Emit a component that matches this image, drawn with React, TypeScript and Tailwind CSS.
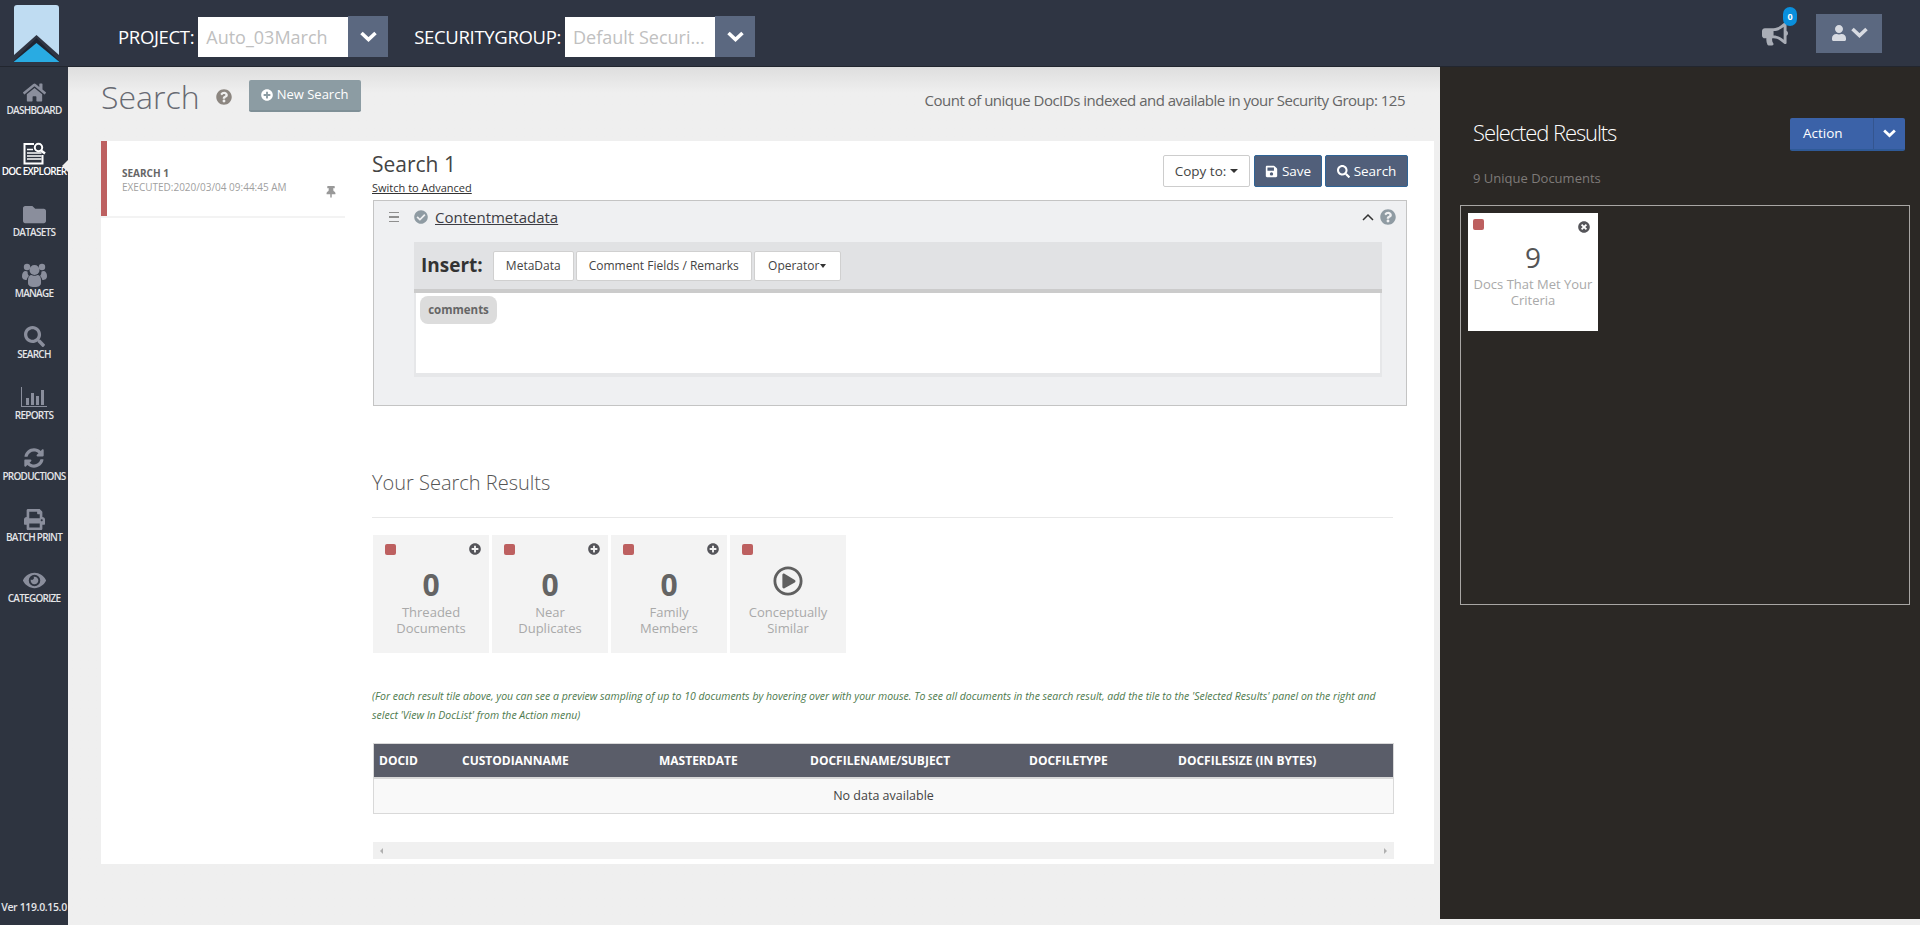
import {
  FaBullhorn,
  FaCheckCircle,
  FaEye,
  FaFolder,
  FaHome,
  FaPlusCircle,
  FaPrint,
  FaQuestionCircle,
  FaRegPlayCircle,
  FaSave,
  FaSearch,
  FaSyncAlt,
  FaThumbtack,
  FaTimesCircle,
  FaUser,
} from "react-icons/fa";

function Chevron({ width = 17 }: { width?: number }) {
  return (
    <svg width={width} height={width * 0.65} viewBox="0 0 17 11" fill="none" stroke="currentColor" strokeWidth="3.6">
      <path d="M1.500 2l7 6.500 7-6.500" />
    </svg>
  );
}

function DocExplorerIcon() {
  return (
    <svg width="23" height="23" viewBox="0 0 23 23" fill="none" stroke="#ffffff">
      <path d="M11 2H1.500v19.500h18V13" strokeWidth="2" />
      <path d="M4 7.500h6M4 11h14.500M4 14h14.500M4 17h14.500" strokeWidth="1.700" />
      <circle cx="15.500" cy="5.500" r="3.700" strokeWidth="2" />
      <path d="M18 8.500l4 3" strokeWidth="2.600" />
    </svg>
  );
}

function ManageIcon() {
  return (
    <svg width="25" height="24" viewBox="0 0 25 24" fill="#8a8e9c">
      <circle cx="5" cy="4" r="3.200" />
      <circle cx="20" cy="4" r="3.200" />
      <circle cx="12.500" cy="7" r="5" />
      <path d="M0 13c0-3 1.500-5 3.500-5 .8 0 1.600.3 2.200.8-.4 1.300.3 3 1.300 4.200-1.200 1-2 2.300-2.300 4C2 17 0 16 0 13z" />
      <path d="M25 13c0-3-1.500-5-3.500-5-.8 0-1.600.3-2.200.8.4 1.300-.3 3-1.300 4.200 1.200 1 2 2.300 2.300 4C23 17 25 16 25 13z" />
      <path d="M6 17c0-3 1.500-5 3.500-5 1 1 5 1 6 0 2 0 3.500 2 3.500 5v3c0 2.500-2 4-6.500 4S6 22.500 6 20z" />
    </svg>
  );
}

function ReportsIcon() {
  return (
    <svg width="26" height="20" viewBox="0 0 26 20" fill="#8a8e9c">
      <path d="M0 0h1v19h25v1H0z" />
      <rect x="5" y="11" width="3" height="7" />
      <rect x="10" y="6" width="3" height="12" />
      <rect x="15" y="9" width="3" height="9" />
      <rect x="20" y="3" width="3" height="15" />
    </svg>
  );
}

function Logo() {
  return (
    <svg width="48" height="58" viewBox="0 0 48 58">
      <path d="M1 3a3 3 0 0 1 3-3h39a3 3 0 0 1 3 3v47L23.500 30 1 50z" fill="#bfdcf2" />
      <path d="M0 57L23.500 33 47 57H40L23.500 40 7 57z" fill="#1e2532" />
      <path d="M0.500 57L23.500 38 46.500 57z" fill="#29abe2" />
    </svg>
  );
}

const navItems = [
  { label: "DASHBOARD", icon: <FaHome className="text-[23px] text-[#8a8e9c]" /> },
  { label: "DOC EXPLORER", icon: <DocExplorerIcon />, active: true },
  { label: "DATASETS", icon: <FaFolder className="text-[23px] text-[#8a8e9c]" /> },
  { label: "MANAGE", icon: <ManageIcon /> },
  { label: "SEARCH", icon: <FaSearch className="text-[21px] text-[#8a8e9c]" /> },
  { label: "REPORTS", icon: <ReportsIcon /> },
  { label: "PRODUCTIONS", icon: <FaSyncAlt className="text-[20px] text-[#8a8e9c]" /> },
  { label: "BATCH PRINT", icon: <FaPrint className="text-[21px] text-[#8a8e9c]" /> },
  { label: "CATEGORIZE", icon: <FaEye className="text-[23px] text-[#8a8e9c]" /> },
];

const tiles = [
  { value: "0", line1: "Threaded", line2: "Documents" },
  { value: "0", line1: "Near", line2: "Duplicates" },
  { value: "0", line1: "Family", line2: "Members" },
  { value: null, line1: "Conceptually", line2: "Similar" },
];

const columns = [
  { label: "DOCID", width: "w-[83px]" },
  { label: "CUSTODIANNAME", width: "w-[197px]" },
  { label: "MASTERDATE", width: "w-[151px]" },
  { label: "DOCFILENAME/SUBJECT", width: "w-[219px]" },
  { label: "DOCFILETYPE", width: "w-[149px]" },
  { label: "DOCFILESIZE (IN BYTES)", width: "w-[200px]" },
];

function HeaderSelect({ label, value }: { label: string; value: string }) {
  return (
    <div className="mt-[7px] flex items-center">
      <span className="mr-[4px] text-[18.500px] tracking-[-0.33px] text-white">{label}</span>
      <div className="flex h-[41px] items-end">
        <div className="flex h-[40px] w-[150px] items-center bg-white pl-2 text-[18px] text-[#c0c0c0]">{value}</div>
        <div className="flex h-[41px] w-10 items-center justify-center bg-[#5b6880] text-white">
          <Chevron />
        </div>
      </div>
    </div>
  );
}

function Sidebar() {
  return (
    <aside className="flex w-[68px] shrink-0 flex-col bg-[#2e3440] pt-[13px]">
      {navItems.map((item) => (
        <div key={item.label} className="relative flex h-[61px] flex-col items-center">
          <div className="flex h-[24px] items-center justify-center">{item.icon}</div>
          <span className={`-mt-px whitespace-nowrap text-[10px] leading-[14px] font-semibold tracking-[-0.75px] ${item.active ? "text-white" : "text-[#e4e5e8]"}`}>
            {item.label}
          </span>
          {item.active && (
            <div className="absolute right-0 top-[19px] h-0 w-0 border-y-[6px] border-r-[6px] border-y-transparent border-r-[#efefef]" />
          )}
        </div>
      ))}
      <div className="mt-auto pb-[9px] text-center text-[10.500px] font-semibold tracking-[-0.35px] whitespace-nowrap text-[#e4e5e8]">Ver 119.0.15.0</div>
    </aside>
  );
}

function ResultTile({ value, line1, line2 }: { value: string | null; line1: string; line2: string }) {
  return (
    <div className="relative flex h-[118px] w-[116px] flex-col items-center bg-[#f3f3f3]">
      <div className="absolute left-3 top-[9px] h-[11px] w-[11px] rounded-[2px] bg-[#bd6060]" />
      {value !== null && <FaPlusCircle className="absolute right-2 top-2 text-[12px] text-[#55555a]" />}
      {value !== null ? (
        <div className="mt-[30px] h-[39px] text-[30px] leading-[39px] font-bold text-[#646464]">{value}</div>
      ) : (
        <div className="mt-[31px] flex h-[38px] items-start">
          <FaRegPlayCircle className="text-[30px] text-[#5f5f5f]" />
        </div>
      )}
      <div className="text-center text-[13px] leading-4 text-[#a9a9a9]">
        <div>{line1}</div>
        <div>{line2}</div>
      </div>
    </div>
  );
}

function SearchEditor() {
  return (
    <div className="ml-px h-[206px] w-[1034px] border border-[#c4c4c4] bg-[#eff0f2]">
      <div className="flex h-[41px] items-center pb-[9px] pl-[15px] pr-[10px]">
        <span className="w-[10px] text-[#8f8f8f]">
          <span className="block h-[1.500px] bg-current" />
          <span className="mt-[3px] block h-[1.500px] bg-current" />
          <span className="mt-[3px] block h-[1.500px] bg-current" />
        </span>
        <FaCheckCircle className="ml-[15px] text-[14px] text-[#8f9ba3]" />
        <span className="ml-[7px] text-[15px] text-[#3d3d44] underline">Contentmetadata</span>
        <svg width="12" height="8" viewBox="0 0 12 8" fill="none" stroke="#333" strokeWidth="1.500" className="ml-auto">
          <path d="M1 7l5-5 5 5" />
        </svg>
        <FaQuestionCircle className="ml-[6px] text-[16px] text-[#8f9ba3]" />
      </div>
      <div className="ml-[40px] w-[968px]">
        <div className="flex h-[47px] items-center bg-[#e1e2e4] pl-[7px]">
          <span className="mr-[10px] text-[19px] font-bold text-[#333]">Insert:</span>
          <div className="flex gap-[2px]">
            <span className="flex h-[30px] w-[81px] items-center justify-center rounded-[2px] border border-[#d0d0d0] bg-white text-[12px] text-[#444]">MetaData</span>
            <span className="flex h-[30px] w-[176px] items-center justify-center rounded-[2px] border border-[#d0d0d0] bg-white text-[12px] text-[#444]">Comment Fields / Remarks</span>
            <span className="flex h-[30px] w-[87px] items-center justify-center rounded-[2px] border border-[#d0d0d0] bg-white text-[12px] text-[#444]">
              Operator
              <span className="ml-px h-0 w-0 border-x-[3px] border-t-[4px] border-x-transparent border-t-[#333]" />
            </span>
          </div>
        </div>
        <div className="h-[4px] bg-[#cbcbcb]" />
        <div className="h-[84px] border-x-2 border-b-4 border-[#e6e7e9] bg-white pl-[4px] pt-[3px]">
          <span className="flex h-[28px] w-[77px] items-center justify-center rounded-[8px] bg-[#dcdcdc] text-[11.500px] font-bold text-[#666]">comments</span>
        </div>
      </div>
    </div>
  );
}

function ResultsTable() {
  return (
    <div className="ml-px w-[1021px]">
      <div className="flex h-[34px] items-center border border-b-0 border-[#d9d9d9] bg-[#5a5d69] pl-[5px] pt-px">
        {columns.map((col) => (
          <span key={col.label} className={`${col.width} text-[12px] font-bold whitespace-nowrap text-white`}>
            {col.label}
          </span>
        ))}
      </div>
      <div className="flex h-[37px] items-center justify-center border border-t-2 border-[#d9d9d9] bg-[#f9f9f9] text-[12.500px] text-[#444]">
        No data available
      </div>
      <div className="mt-[28px] flex h-[17px] items-center justify-between bg-[#f0f0f0] px-[7px]">
        <span className="h-0 w-0 border-y-[3.500px] border-r-[3.500px] border-y-transparent border-r-[#b0b0b0]" />
        <span className="h-0 w-0 border-y-[3.500px] border-l-[3.500px] border-y-transparent border-l-[#b0b0b0]" />
      </div>
    </div>
  );
}

export default function App() {
  return (
    <div className="flex h-[925px] w-[1920px] flex-col overflow-hidden bg-[#efefef] font-['Open_Sans',sans-serif]">
      <header className="flex h-[67px] shrink-0 items-center border-b border-[#22262f] bg-[#2f3543]">
        <div className="ml-[13px] mr-[57px] mt-px">
          <Logo />
        </div>
        <div className="mr-[26px]">
          <HeaderSelect label="PROJECT:" value="Auto_03March" />
        </div>
        <HeaderSelect label="SECURITYGROUP:" value="Default Securi..." />
        <div className="relative ml-auto mr-[28px] mt-[2px] text-[#a9adb6]">
          <FaBullhorn className="text-[26px]" />
          <span className="absolute -right-[9px] -top-[14px] flex h-[19px] w-[14px] items-center justify-center rounded-full bg-[#0a8fdc] text-[9px] font-bold text-white">0</span>
        </div>
        <div className="mr-[38px] flex h-[39px] w-[66px] items-center justify-center gap-1 bg-[#5b6880] text-[#d8dbe2]">
          <FaUser className="text-[16px]" />
          <Chevron />
        </div>
      </header>
      <div className="flex min-h-0 flex-1">
        <Sidebar />
        <main className="w-[1372px] shrink-0 bg-[#efefef] bg-gradient-to-b from-[#dedede] to-[#efefef] to-[3%] pl-[33px]">
          <div className="flex h-[74px] items-start pr-[35px] pt-[12px]">
            <h1 className="text-[32px] leading-[35px] font-light text-[#676a72]">Search</h1>
            <FaQuestionCircle className="ml-4 mt-[10px] text-[16px] text-[#8c8680]" />
            <button type="button" className="ml-[17px] mt-px flex h-[32px] w-[112px] items-center justify-center gap-1 rounded-[2px] border-b-2 border-[#7f9097] bg-[#8c9ca3] text-[13px] text-white">
              <FaPlusCircle className="text-[12px]" />
              New Search
            </button>
            <span className="ml-auto mt-[10px] text-[15px] tracking-[-0.5px] text-[#666]">Count of unique DocIDs indexed and available in your Security Group: 125</span>
          </div>
          <div className="flex h-[723px] w-[1333px] bg-white">
            <div className="w-[244px] shrink-0">
              <div className="relative h-[75px] border-l-[6px] border-[#bd6060] pl-[15px] pt-[25px]">
                <div className="text-[10px] leading-[14px] font-bold text-[#666]">SEARCH 1</div>
                <div className="text-[10px] leading-[14px] text-[#a0a0a0]">EXECUTED:2020/03/04 09:44:45 AM</div>
                <FaThumbtack className="absolute right-[8px] top-[45px] text-[12px] text-[#999]" />
              </div>
              <div className="h-[2px] bg-[#f3f3f3]" />
            </div>
            <div className="ml-[27px] flex-1">
              <div className="flex h-[59px] w-[1036px] items-start justify-between">
                <div className="pt-[10px]">
                  <div className="text-[21px] leading-[27px] text-[#444]">Search 1</div>
                  <div className="mt-[3px] text-[11px] leading-[14px] text-[#333] underline">Switch to Advanced</div>
                </div>
                <div className="mt-[14px] flex gap-[3px]">
                  <button type="button" className="mr-px flex h-[32px] w-[87px] items-center justify-center gap-1 rounded-[2px] border border-[#cdcdcd] bg-white text-[13.500px] text-[#444]">
                    Copy to:
                    <span className="h-0 w-0 border-x-[4px] border-t-[4px] border-x-transparent border-t-[#333]" />
                  </button>
                  <button type="button" className="flex h-[32px] w-[68px] items-center justify-center gap-1 rounded-[2px] border border-[#2f6496] bg-[#515f7a] text-[13.500px] text-white">
                    <FaSave className="text-[13px]" />
                    Save
                  </button>
                  <button type="button" className="flex h-[32px] w-[83px] items-center justify-center gap-1 rounded-[2px] border border-[#2f6496] bg-[#515f7a] text-[13.500px] text-white">
                    <FaSearch className="text-[13px]" />
                    Search
                  </button>
                </div>
              </div>
              <SearchEditor />
              <h2 className="mt-[63px] text-[20px] leading-[27px] font-light text-[#555]">Your Search Results</h2>
              <div className="mt-[21px] h-px w-[1021px] bg-[#e8e8e8]" />
              <div className="ml-px mt-[17px] flex gap-[3px]">
                {tiles.map((tile) => (
                  <ResultTile key={tile.line1} value={tile.value} line1={tile.line1} line2={tile.line2} />
                ))}
              </div>
              <p className="mt-[34px] w-[1021px] text-[10.500px] leading-[19px] text-[#4d7a4d] italic">
                (For each result tile above, you can see a preview sampling of up to 10 documents by hovering over with your mouse. To see all documents in the search result, add the tile to the 'Selected Results' panel on the right and select 'View In DocList' from the Action menu)
              </p>
              <div className="mt-[18px]">
                <ResultsTable />
              </div>
            </div>
          </div>
        </main>
        <aside className="mb-[6px] w-[480px] shrink-0 bg-[#2b2825] pl-[20px] pr-[10px] pt-[51px]">
          <div className="flex h-[33px] items-center justify-between pl-[13px] pr-[5px]">
            <h2 className="-mt-[5px] text-[22px] leading-[27px] font-light tracking-[-1.1px] text-white">Selected Results</h2>
            <div className="flex h-[33px] w-[115px] items-center rounded-[2px] border-b-2 border-[#2f5a97] bg-[#3b62a8] text-[13.500px] text-white">
              <span className="flex h-full w-[84px] items-center border-r border-[#34558f] pl-[13px]">Action</span>
              <span className="flex flex-1 items-center justify-center">
                <Chevron width={13} />
              </span>
            </div>
          </div>
          <div className="mt-[18px] pl-[13px] text-[13px] leading-[18px] text-[#7e7a78]">9 Unique Documents</div>
          <div className="mt-[18px] h-[400px] w-[450px] border border-[#a8a6a4] pl-[7px] pt-[7px]">
            <div className="relative flex h-[118px] w-[130px] flex-col items-center bg-white">
              <div className="absolute left-[5px] top-[6px] h-[11px] w-[11px] rounded-[2px] bg-[#bd6060]" />
              <FaTimesCircle className="absolute right-2 top-2 text-[12px] text-[#55555a]" />
              <div className="mt-[27px] h-[36px] text-[28px] leading-[35px] text-[#555]">9</div>
              <div className="text-center text-[13px] leading-4 text-[#a9a9a9]">
                <div>Docs That Met Your</div>
                <div>Criteria</div>
              </div>
            </div>
          </div>
        </aside>
      </div>
    </div>
  );
}
